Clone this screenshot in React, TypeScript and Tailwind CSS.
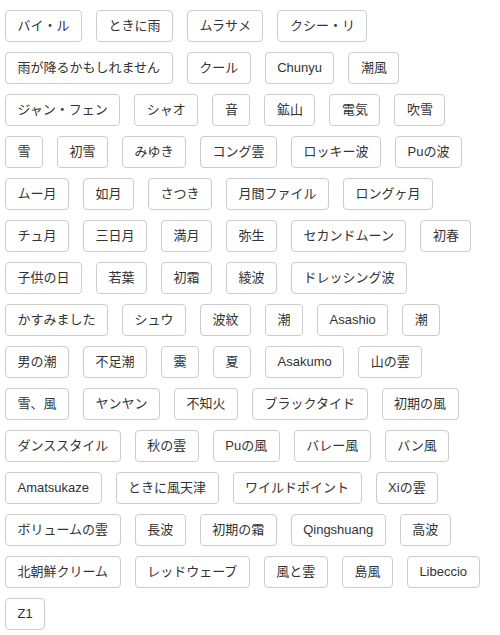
import React from "react";

const tags = [
  "バイ・ル", "ときに雨", "ムラサメ", "クシー・リ",
  "雨が降るかもしれません", "クール", "Chunyu", "潮風",
  "ジャン・フェン", "シャオ", "音", "鉱山", "電気", "吹雪",
  "雪", "初雪", "みゆき", "コング雲", "ロッキー波", "Puの波",
  "ムー月", "如月", "さつき", "月間ファイル", "ロングヶ月",
  "チュ月", "三日月", "満月", "弥生", "セカンドムーン", "初春",
  "子供の日", "若葉", "初霜", "綾波", "ドレッシング波",
  "かすみました", "シュウ", "波紋", "潮", "Asashio", "潮",
  "男の潮", "不足潮", "霙", "夏", "Asakumo", "山の雲",
  "雪、風", "ヤンヤン", "不知火", "ブラックタイド", "初期の風",
  "ダンススタイル", "秋の雲", "Puの風", "バレー風", "バン風",
  "Amatsukaze", "ときに風天津", "ワイルドポイント", "Xiの雲",
  "ボリュームの雲", "長波", "初期の霜", "Qingshuang", "高波",
  "北朝鮮クリーム", "レッドウェーブ", "風と雲", "島風", "Libeccio",
  "Z1",
];

export default function App() {
  return (
    <div className="w-[500px] min-h-[635px] bg-white px-[5px] pt-[10px] font-['Liberation_Sans','Noto_Sans_CJK_JP',sans-serif]">
      <div className="flex flex-wrap gap-x-[14px] gap-y-[10px]">
        {tags.map((t, i) => (
          <button
            key={i}
            className="h-8 flex items-center px-[11.5px] border border-[#cccccc] rounded-[4px] bg-white text-[13px] leading-[18px] text-[#333333]"
          >
            {t}
          </button>
        ))}
      </div>
    </div>
  );
}
